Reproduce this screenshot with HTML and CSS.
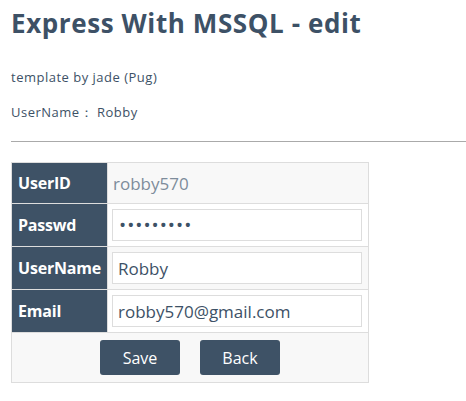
FILE: index.html
```html
<!DOCTYPE html>
<html>
<head>
<meta charset="utf-8">
<link rel="stylesheet" href="styles.css">
</head>
<body>
<h1 class="title">Express With MSSQL - edit</h1>
<p class="note">template by jade (Pug)</p>
<p class="note">UserName： Robby</p>
<hr class="rule">
<form class="form">
<table class="grid">
<colgroup><col class="c1"><col class="c2"></colgroup>
<tr class="odd"><th class="label">UserID</th><td class="cell id">robby570</td></tr>
<tr><th class="label">Passwd</th><td class="cell"><input class="field pass" type="password" value="robby5700"></td></tr>
<tr class="odd"><th class="label">UserName</th><td class="cell"><input class="field" type="text" value="Robby"></td></tr>
<tr><th class="label">Email</th><td class="cell"><input class="field" type="text" value="robby570@gmail.com"></td></tr>
<tr class="odd"><td class="actions" colspan="2"><button class="btn" type="button">Save</button><button class="btn" type="button">Back</button></td></tr>
</table>
</form>
</body>
</html>
```
FILE: styles.css
```css
html, body { margin: 0; padding: 0; background: #fff; }
body {
  padding: 0 0 0 11px;
  font-family: "Open Sans", "Noto Sans", sans-serif;
  color: #3d5166;
}
.title {
  margin: 0;
  padding-top: 5px;
  font-size: 26px;
  line-height: 36px;
  font-weight: 700;
  letter-spacing: 0.6px;
}
.note {
  margin: 0;
  font-size: 13px;
  line-height: 16px;
  letter-spacing: 0.5px;
}
.title + .note { margin-top: 28px; }
.note + .note { margin-top: 19px; }
.rule {
  margin: 21px 0 0 0;
  border: 0;
  height: 1px;
  background: #aaa;
}
.form { margin-top: 20px; }
.grid {
  border-collapse: collapse;
  table-layout: fixed;
  width: 357px;
}
.c1 { width: 96px; }
.c2 { width: 261px; }
.grid tr { background: #fff; }
.grid tr.odd { background: #f8f8f8; }
.label, .cell, .actions { border: 1px solid #ddd; }
.label {
  background: #3e5266;
  color: #fff;
  text-align: left;
  font-size: 16px;
  font-weight: 700;
  letter-spacing: -0.2px;
  padding: 0 0 0 6px;
  white-space: nowrap;
  overflow: hidden;
}
.cell {
  padding: 5px 6px 5px 4px;
  height: 32px;
}
.id {
  color: #7d8c9b;
  font-size: 17px;
  height: 32px;
  padding-top: 4px;
  padding-bottom: 4px;
  padding-left: 5px;
}
.field {
  display: block;
  box-sizing: border-box;
  width: 250px;
  height: 32px;
  margin: 0;
  border: 1px solid #ddd;
  background: #fff;
  padding: 0 5px;
  font-family: "Open Sans", "Noto Sans", sans-serif;
  font-size: 17px;
  color: #3d5166;
  outline: none;
}
.pass {
  font-size: 19px;
  letter-spacing: 1px;
  padding-left: 6px;
}
.actions {
  text-align: center;
  padding: 7px 0 7px 0;
}
.btn {
  width: 80px;
  height: 35px;
  margin: 0 10px;
  border: 0;
  border-radius: 3px;
  background: #3e5266;
  color: #fff;
  font-family: "Open Sans", "Noto Sans", sans-serif;
  font-size: 16px;
  vertical-align: top;
}
```
